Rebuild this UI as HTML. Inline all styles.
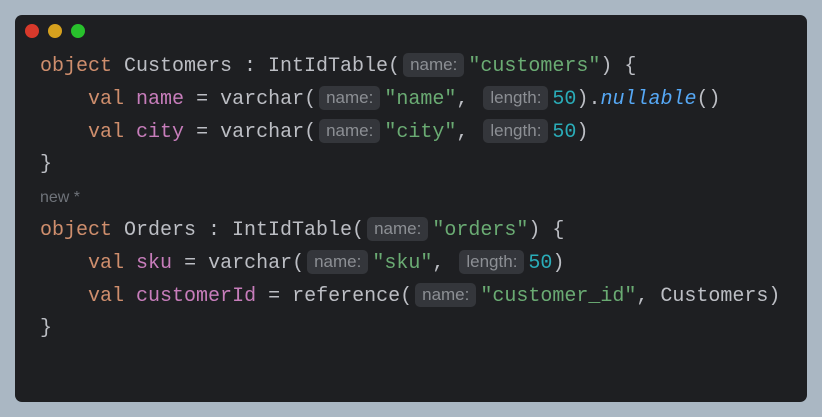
<!DOCTYPE html>
<html><head><style>
html,body{margin:0;padding:0;width:822px;height:417px;background:#aab7c3;overflow:hidden}
.win{position:absolute;left:15px;top:15px;width:792px;height:387px;background:#1e1f22;border-radius:7px}
.dot{position:absolute;top:9px;width:14px;height:14px;border-radius:50%}
.code{position:absolute;left:25px;top:36px;font-family:"Liberation Mono",monospace;font-size:20px;color:#bcbec4}
.l{height:32.8px;line-height:32.8px;white-space:pre}
.k{color:#cf8e6d}.p{color:#c77dbb}.s{color:#6aab73}.n{color:#2aacb8}.i{color:#56a8f5;font-style:italic}
.h{display:inline-block;font-family:"Liberation Sans",sans-serif;font-size:17px;color:#8c8f94;background:#34363b;border-radius:5px;padding:0 7px;height:24px;line-height:24px;margin:0 4px 0 3px;vertical-align:1px}
.new{font-family:"Liberation Sans",sans-serif;font-size:16px;color:#6f737a}
</style></head><body>
<div class="win">
<div class="dot" style="left:10px;background:#d8392b"></div>
<div class="dot" style="left:33px;background:#d6a11e"></div>
<div class="dot" style="left:56px;background:#28c12c"></div>
<div class="code"><div class="l"><span class="k">object</span> Customers : IntIdTable(<span class="h">name:</span><span class="s">"customers"</span>) {</div><div class="l">    <span class="k">val</span> <span class="p">name</span> = varchar(<span class="h">name:</span><span class="s">"name"</span>, <span class="h">length:</span><span class="n">50</span>).<span class="i">nullable</span>()</div><div class="l">    <span class="k">val</span> <span class="p">city</span> = varchar(<span class="h">name:</span><span class="s">"city"</span>, <span class="h">length:</span><span class="n">50</span>)</div><div class="l">}</div><div class="l new">new *</div><div class="l"><span class="k">object</span> Orders : IntIdTable(<span class="h">name:</span><span class="s">"orders"</span>) {</div><div class="l">    <span class="k">val</span> <span class="p">sku</span> = varchar(<span class="h">name:</span><span class="s">"sku"</span>, <span class="h">length:</span><span class="n">50</span>)</div><div class="l">    <span class="k">val</span> <span class="p">customerId</span> = reference(<span class="h">name:</span><span class="s">"customer_id"</span>, Customers)</div><div class="l">}</div></div>
</div>
</body></html>
